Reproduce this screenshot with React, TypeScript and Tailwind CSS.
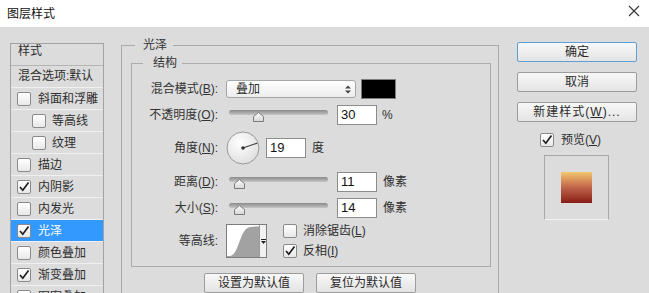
import type { ReactNode } from "react";
import clsx from "clsx";

const styleRows = [
  { label: "斜面和浮雕" },
  { label: "等高线", indent: true },
  { label: "纹理", indent: true },
  { label: "描边" },
  { label: "内阴影", checked: true },
  { label: "内发光" },
  { label: "光泽", checked: true, active: true },
  { label: "颜色叠加" },
  { label: "渐变叠加", checked: true },
  { label: "图案叠加" },
];

function Check({ checked }: { checked?: boolean }) {
  return (
    <span className="flex h-[14px] w-[14px] shrink-0 items-center justify-center rounded-[2px] border border-[#8a8a8a] bg-linear-to-b from-white to-[#e8e8e8]">
      {checked && (
        <svg width="12" height="12" viewBox="0 0 12 12">
          <path d="M2 6 L4.8 9.2 L10.5 1.5" fill="none" stroke="#1e1e1e" strokeWidth="1.7" />
        </svg>
      )}
    </span>
  );
}

function Btn({
  children,
  focus,
  className,
}: {
  children: ReactNode;
  focus?: boolean;
  className?: string;
}) {
  return (
    <div
      className={clsx(
        "flex h-[20px] items-center justify-center rounded-[2px] border bg-linear-to-b from-[#f8f8f8] to-[#e4e4e4] text-[#2a2a2a]",
        focus ? "border-[#5f9fd8]" : "border-[#9c9c9c]",
        className,
      )}
    >
      {children}
    </div>
  );
}

function NumBox({ value }: { value: string }) {
  return (
    <div className="flex h-[20px] w-[40px] shrink-0 items-center border border-[#8c8c8c] bg-white pl-[3px] text-[13px] text-[#111]">
      {value}
    </div>
  );
}

function Slider({ thumb }: { thumb: string }) {
  return (
    <div className="relative ml-[11px] h-[20px] w-[99px] shrink-0">
      <div className="mt-[5px] h-[5px] rounded-[3px] bg-linear-to-b from-[#8a8a8a] to-[#c6c6c6]" />
      <svg
        className={clsx("absolute top-[7px]", thumb)}
        width="11"
        height="10"
        viewBox="0 0 11 10"
      >
        <defs>
          <linearGradient id="th" x1="0" y1="0" x2="0" y2="1">
            <stop offset="0" stopColor="#fdfdfd" />
            <stop offset="1" stopColor="#d6d6d6" />
          </linearGradient>
        </defs>
        <path d="M5.5 0.5 L10.5 4.5 L10.5 9.5 L0.5 9.5 L0.5 4.5 Z" fill="url(#th)" stroke="#7c7c7c" />
      </svg>
    </div>
  );
}

function Label({ children }: { children: ReactNode }) {
  return <div className="w-[86px] shrink-0 text-right text-[#333]">{children}</div>;
}

function Dial() {
  const a = (19 * Math.PI) / 180;
  return (
    <svg className="ml-[8px] shrink-0" width="34" height="34" viewBox="0 0 34 34">
      <defs>
        <radialGradient id="dl" cx="0.4" cy="0.35" r="0.7">
          <stop offset="0" stopColor="#ffffff" />
          <stop offset="1" stopColor="#dedede" />
        </radialGradient>
      </defs>
      <circle cx="17" cy="17" r="16" fill="url(#dl)" stroke="#9a9a9a" />
      <line
        x1="17"
        y1="17"
        x2={17 + 15 * Math.cos(a)}
        y2={17 - 15 * Math.sin(a)}
        stroke="#333"
        strokeWidth="1.1"
      />
      <circle cx="17" cy="17" r="1.8" fill="#333" />
    </svg>
  );
}

function Contour() {
  return (
    <div className="ml-[8px] flex h-[34px] w-[41px] shrink-0 border border-[#7d7d7d] bg-white">
      <svg width="32" height="32" viewBox="0 0 32 32">
        <path
          d="M0 31 L3 31 C11 30 12 11 19 4 C22 1.5 26 1.5 32 1.5 L32 32 L0 32 Z"
          fill="#a2a2a2"
        />
      </svg>
      <div className="flex flex-1 items-center justify-center border-l border-[#9a9a9a] bg-[#f1f1f1]">
        <svg width="5" height="5" viewBox="0 0 5 5">
          <rect x="0" y="0" width="5" height="1" fill="#222" />
          <path d="M0 2 L5 2 L2.5 5 Z" fill="#222" />
        </svg>
      </div>
    </div>
  );
}

export default function App() {
  return (
    <div className="h-[293px] w-[649px] overflow-hidden bg-[#dcdcdc] font-['Liberation_Sans','Noto_Sans_CJK_SC',sans-serif] text-[12px] leading-[16px] text-[#2e2e2e]">
      <div className="flex h-[27px] items-center justify-between bg-white pl-[7px] pr-[9px] text-[#111]">
        <span>图层样式</span>
        <svg className="-mt-[5px]" width="12" height="12" viewBox="0 0 12 12">
          <path d="M1 1 L11 11 M11 1 L1 11" stroke="#333" strokeWidth="1.1" />
        </svg>
      </div>

      <div className="flex">
        {/* style list */}
        <div className="ml-[10px] mt-[16px] h-[260px] w-[94px] shrink-0 border border-[#a3a3a3]">
          <div className="h-[22px] border-b border-[#b5b5b5] pl-[7px] leading-[14px]">样式</div>
          <div className="flex h-[22px] items-start border-b border-[#f0f0f0] pl-[7px] pt-[2px]">
            混合选项:默认
          </div>
          {styleRows.map((r) => (
            <div
              key={r.label}
              className={clsx(
                "flex h-[22px] items-center border-b border-[#f0f0f0]",
                r.indent ? "pl-[21px]" : "pl-[6px]",
                r.active && "bg-[#3399ff] text-white",
              )}
            >
              <Check checked={r.checked} />
              <span className={r.indent ? "ml-[6px]" : "ml-[7px]"}>{r.label}</span>
            </div>
          ))}
        </div>

        {/* settings */}
        <fieldset className="ml-[17px] mt-[10px] h-[300px] w-[378px] shrink-0 border border-[#ababab]">
          <legend className="ml-[13px] pl-[8px] pr-[6px] text-[#333]">光泽</legend>
          <fieldset className="ml-[9px] mt-[2px] w-[360px] border border-[#ababab] pb-[8px]">
            <legend className="ml-[11px] pl-[10px] pr-[5px] text-[#333]">结构</legend>

            <div className="mt-[8px] flex h-[20px] items-center">
              <Label>
                混合模式(<u>B</u>):
              </Label>
              <div className="ml-[8px] flex h-[18px] w-[130px] items-center justify-between rounded-[3px] border border-[#a6a6a6] bg-linear-to-b from-white to-[#ededed] pl-[9px] pr-[4px]">
                <span>叠加</span>
                <svg width="6" height="9" viewBox="0 0 6 9">
                  <path d="M0 3.5 L3 0.5 L6 3.5 Z M0 5.5 L6 5.5 L3 8.5 Z" fill="#444" />
                </svg>
              </div>
              <div className="ml-[5px] h-[20px] w-[35px] border border-[#7d7d7d] bg-black" />
            </div>

            <div className="mt-[6px] flex h-[20px] items-center">
              <Label>
                不透明度(<u>O</u>):
              </Label>
              <Slider thumb="left-[24px]" />
              <div className="ml-[9px]">
                <NumBox value="30" />
              </div>
              <span className="ml-[5px]">%</span>
            </div>

            <div className="mt-[6px] flex h-[34px] items-center">
              <Label>
                角度(<u>N</u>):
              </Label>
              <Dial />
              <div className="ml-[6px]">
                <NumBox value="19" />
              </div>
              <span className="ml-[6px]">度</span>
            </div>

            <div className="mt-[7px] flex h-[20px] items-center">
              <Label>
                距离(<u>D</u>):
              </Label>
              <Slider thumb="left-[5px]" />
              <div className="ml-[9px]">
                <NumBox value="11" />
              </div>
              <span className="ml-[6px]">像素</span>
            </div>

            <div className="mt-[6px] flex h-[20px] items-center">
              <Label>
                大小(<u>S</u>):
              </Label>
              <Slider thumb="left-[5px]" />
              <div className="ml-[9px]">
                <NumBox value="14" />
              </div>
              <span className="ml-[6px]">像素</span>
            </div>

            <div className="mt-[6px] flex h-[34px] items-center">
              <Label>等高线:</Label>
              <Contour />
              <div className="ml-[16px] flex flex-col gap-[6px]">
                <div className="flex h-[14px] items-center">
                  <Check />
                  <span className="ml-[6px]">
                    消除锯齿(<u>L</u>)
                  </span>
                </div>
                <div className="flex h-[14px] items-center">
                  <Check checked />
                  <span className="ml-[6px]">
                    反相(<u>I</u>)
                  </span>
                </div>
              </div>
            </div>
          </fieldset>

          <div className="mt-[6px] flex justify-center gap-[12px]">
            <Btn className="w-[100px]">设置为默认值</Btn>
            <Btn className="w-[100px]">复位为默认值</Btn>
          </div>
        </fieldset>

        {/* actions */}
        <div className="ml-[18px] mt-[15px] flex w-[120px] shrink-0 flex-col">
          <Btn focus>确定</Btn>
          <Btn className="mt-[10px]">取消</Btn>
          <Btn className="mt-[10px] tracking-[1px]">
            新建样式(<u>W</u>)...
          </Btn>
          <div className="mt-[11px] flex h-[14px] items-center pl-[23px]">
            <Check checked />
            <span className="ml-[7px]">
              预览(<u>V</u>)
            </span>
          </div>
          <div className="ml-[27px] mt-[8px] flex h-[65px] w-[65px] items-center justify-center border border-[#a9a9a9] border-b-[#f2f2f2]">
            <div className="h-[31px] w-[31px] bg-linear-to-b from-[#f2c66e] via-[#c0644a] to-[#871b17]" />
          </div>
        </div>
      </div>
    </div>
  );
}
